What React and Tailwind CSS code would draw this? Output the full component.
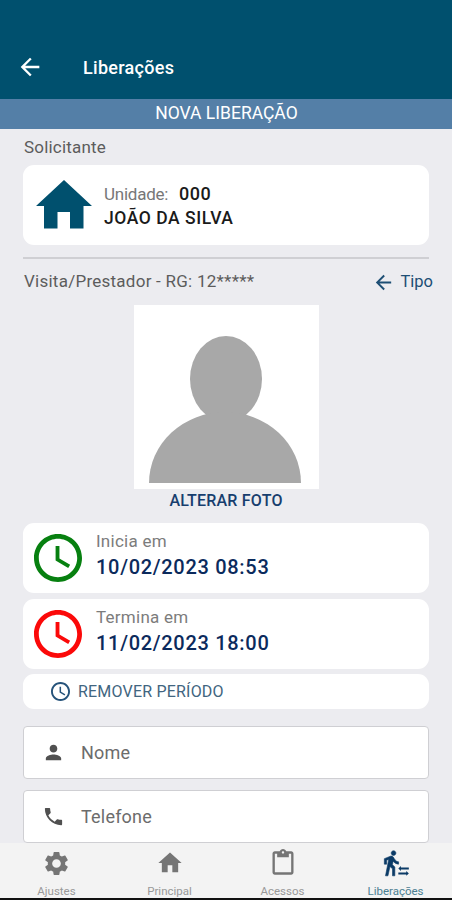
import {
  MdArrowBack,
  MdSettings,
  MdHome,
  MdPerson,
  MdPhone,
  MdOutlineContentPaste,
} from 'react-icons/md';

function Clock({ className }) {
  return (
    <svg viewBox="2 2 20 20" className={className} fill="currentColor">
      <path d="M11.99 2C6.47 2 2 6.48 2 12s4.47 10 9.99 10C17.52 22 22 17.52 22 12S17.52 2 11.99 2zM12 20c-4.42 0-8-3.58-8-8s3.58-8 8-8 8 3.58 8 8-3.58 8-8 8z" />
      <path d="M12.6 7H11v6l5.25 3.15.8-1.3-4.45-2.65z" />
    </svg>
  );
}

function WalkTransfer({ className }) {
  return (
    <svg viewBox="0 0 24 24" className={className} fill="currentColor">
      <path
        d="M9.9 5.5c1.1 0 2-.9 2-2s-.9-2-2-2-2 .9-2 2 .9 2 2 2zM5.75 8.9 3 23h2.1l1.75-8L9 17v6h2v-7.55L8.95 13.4l.6-3C10.85 12 12.3 12.8 14.200 13v-2c-1.500-.2-2.700-1.100-3.550-2.450l-.95-1.6C9.35 6.35 8.7 6 8 6c-.25 0-.5.05-.75.15L2 8.3V13h2V9.65z"
        stroke="currentColor"
        strokeWidth="0.5"
      />
      <path d="M16.200 14.600 14 16.700l2.200 2.100v-1.200H23v-1.700h-6.800zM20.800 18.800v1.300H14v1.700h6.800V23L23 20.950z" />
    </svg>
  );
}

function Period({ label, value, color }) {
  return (
    <div className="flex h-[70px] items-start rounded-[11px] bg-white pl-[11px]">
      <Clock className={`mt-[11px] h-12 w-12 shrink-0 ${color}`} />
      <div className="ml-[14px] mt-[6px]">
        <div className="h-[25px] text-[17px] leading-[25px] tracking-[0.25px] text-[#7c7c7c]">{label}</div>
        <div className="h-[27px] text-[20px] font-medium leading-[27px] tracking-[0.7px] text-[#0b2a5c]">{value}</div>
      </div>
    </div>
  );
}

function Field({ icon: Icon, label }) {
  return (
    <div className="flex h-[53px] shrink-0 items-center rounded-[4px] border border-[#cfcfd3] bg-white pl-[18px]">
      <Icon className="h-[23px] w-[23px] text-[#505050]" />
      <span className="ml-[16px] text-[18px] tracking-[0.2px] text-[#6c6c6c]">{label}</span>
    </div>
  );
}

function Tab({ icon: Icon, label, size, active }) {
  return (
    <div className={`flex w-[113px] flex-col items-center ${active ? 'text-[#0b3a66]' : 'text-[#757575]'}`}>
      <div className="flex h-[41px] items-center justify-center">
        <Icon className={size} />
      </div>
      <span className={`mt-px text-[11.5px] leading-[14px] ${active ? 'text-[#4c7f92]' : 'text-[#999999]'}`}>{label}</span>
    </div>
  );
}

export default function App() {
  return (
    <div className="flex h-[900px] w-[452px] flex-col overflow-hidden bg-[#ececf0] font-[Roboto,sans-serif]">
      <header className="flex h-[99px] shrink-0 items-end bg-[#00506e] pb-[18px] pl-[16px] text-white">
        <MdArrowBack className="h-7 w-7" />
        <h1 className="ml-[39px] text-[18px] font-medium leading-[27px] tracking-[0.3px]">Liberações</h1>
      </header>
      <div className="h-[30px] shrink-0 bg-[#547fa7] pl-px text-center text-[17.5px] leading-[28px] text-white">NOVA LIBERAÇÃO</div>

      <main className="flex min-h-0 flex-1 flex-col overflow-hidden pl-[23px] pr-[23px]">
        <div className="h-[36px] shrink-0 pl-px text-[17px] leading-[37px] tracking-[0.2px] text-[#5c5c5c]">Solicitante</div>
        <section className="flex h-[80px] shrink-0 rounded-[11px] bg-white pl-[13px] pt-[15px]">
          <svg viewBox="0 0 56 49" className="h-[49px] w-[56px]" fill="#00506e">
            <path d="M28 0 56 26H47.500V48.500H34V32H21.500V48.500H8V26H0Z" />
          </svg>
          <div className="ml-[12px] text-[#1a1a1a]">
            <div className="flex h-[27px] items-baseline text-[17px] leading-[27px]">
              <span className="tracking-[-0.25px] text-[#777777]">Unidade:</span>
              <span className="ml-[11px] text-[18px] font-medium tracking-[0.5px]">000</span>
            </div>
            <div className="h-[22px] text-[17.5px] font-medium leading-[22px] tracking-[0.55px]">JOÃO DA SILVA</div>
          </div>
        </section>
        <hr className="mt-[12px] h-[2px] shrink-0 border-0 bg-[#cfcfd3]" />
        <div className="-mr-[4px] flex h-[46px] shrink-0 items-center pl-px">
          <span className="text-[17px] tracking-[0.25px] text-[#5c5c5c]">Visita/Prestador - RG: 12*****</span>
          <span className="ml-auto flex items-center text-[#1d4e74]">
            <MdArrowBack className="h-[23px] w-[23px]" />
            <span className="ml-[5px] text-[16.5px]">Tipo</span>
          </span>
        </div>
        <svg viewBox="0 0 185 184" className="ml-[111px] h-[184px] w-[185px] shrink-0 bg-white" fill="#a8a8a8">
          <ellipse cx="92" cy="74" rx="36" ry="43" />
          <path d="M15 178A76 71 0 0 1 167 178Z" />
        </svg>
        <div className="h-[33px] shrink-0 text-center text-[16px] font-medium leading-[24px] tracking-[0.2px] text-[#173e6e]">ALTERAR FOTO</div>
        <div className="mt-px flex shrink-0 flex-col gap-[6px]">
          <Period label="Inicia em" value="10/02/2023 08:53" color="text-[#078010]" />
          <Period label="Termina em" value="11/02/2023 18:00" color="text-[#fb0909]" />
        </div>
        <div className="mt-[5px] flex h-[35px] shrink-0 items-center rounded-[11px] bg-white pl-[28px] text-[#26537a]">
          <Clock className="h-[19px] w-[19px]" />
          <span className="ml-[8px] text-[16px] tracking-[0.2px] text-[#416580]">REMOVER PERÍODO</span>
        </div>
        <div className="mt-[17px] flex shrink-0 flex-col gap-[11px]">
          <Field icon={MdPerson} label="Nome" />
          <Field icon={MdPhone} label="Telefone" />
        </div>
      </main>

      <nav className="flex h-[57px] shrink-0 border-b-2 border-[#101010] bg-[#f3f3f3]">
        <Tab icon={MdSettings} label="Ajustes" size="h-[29px] w-[29px]" />
        <Tab icon={MdHome} label="Principal" size="h-[28px] w-[28px]" />
        <Tab icon={MdOutlineContentPaste} label="Acessos" size="h-[28px] w-[28px]" />
        <Tab icon={WalkTransfer} label="Liberações" size="h-[28px] w-[28px]" active />
      </nav>
    </div>
  );
}
